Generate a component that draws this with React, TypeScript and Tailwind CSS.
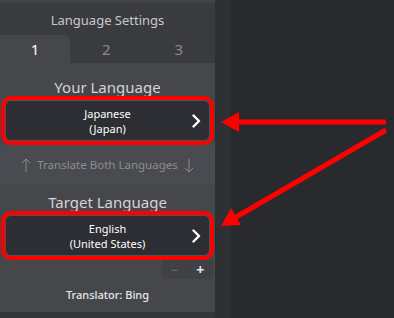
import React from "react";

function LangButton({ l1, l2 }: { l1: string; l2: string }) {
  return (
    <div className="mx-[1px] rounded-[10px] border-[4px] border-[#ff0000] p-0">
      <div className="relative flex h-[41px] flex-col items-center justify-center rounded-[6px] border border-[#505156] bg-[#2d2e33] text-[11px] leading-[15px] text-white">
        <span>{l1}</span>
        <span>{l2}</span>
        <svg className="absolute right-[8px] top-1/2 -translate-y-1/2" width="10" height="14" viewBox="0 0 10 14">
          <path d="M2.5 1.5 L8 7 L2.5 12.5" fill="none" stroke="#ffffff" strokeWidth="2.4" strokeLinecap="round" strokeLinejoin="round" />
        </svg>
      </div>
    </div>
  );
}

function Arrow({ down }: { down?: boolean }) {
  return (
    <svg width="10" height="15" viewBox="0 0 10 15" style={{ transform: down ? "rotate(180deg)" : undefined }}>
      <path d="M5 1 L5 14 M1 5 L5 1 L9 5" fill="none" stroke="#8c8d91" strokeWidth="1" />
    </svg>
  );
}

export default function App() {
  return (
    <div
      className="relative flex h-[318px] w-[394px] overflow-hidden bg-[#292a2e]"
      style={{ fontFamily: '"Noto Sans", "Open Sans", sans-serif' }}
    >
      <div className="flex w-[215px] flex-col bg-[#3a3b3f]">
        <div className="h-[3px] bg-[#424348]" />
        <div className="flex h-[32px] items-center justify-center pt-[3px] text-[13px] text-[#c9c9cc]">
          Language Settings
        </div>
        <div className="flex h-[28px] text-[15px]">
          <div className="flex w-[70px] items-center justify-center rounded-tr-[6px] bg-[#46474b] text-white">1</div>
          <div className="flex flex-1 items-center justify-center text-[#8a8b8f]">2</div>
          <div className="flex flex-1 items-center justify-center text-[#8a8b8f]">3</div>
        </div>
        <div className="flex flex-1 flex-col bg-[#46474b]">
          <div className="flex h-[33px] items-end justify-center text-[15px] leading-[18px] text-[#d4d4d6]">
            Your Language
          </div>
          <LangButton l1="Japanese" l2="(Japan)" />
          <div className="flex h-[40px] items-center justify-center gap-[6px] bg-[#4a4b50] text-[11.5px] text-[#8c8d91]">
            <Arrow />
            <span>Translate Both Languages</span>
            <Arrow down />
          </div>
          <div className="flex h-[26px] items-end justify-center text-[15px] leading-[18px] text-[#d4d4d6]">
            Target Language
          </div>
          <LangButton l1="English" l2="(United States)" />
          <div className="flex justify-end pr-[2px]">
            <div className="flex h-[19px] w-[51px] items-center justify-around rounded-b-[4px] bg-[#404145] text-[14px] leading-none">
              <span className="text-[#6c6d71]">−</span>
              <span className="font-bold text-[#e6e6e8]">+</span>
            </div>
          </div>
          <div className="flex flex-1 items-center justify-center text-[11px] font-medium text-[#e8e8ea]">
            Translator: Bing
          </div>
        </div>
        <div className="h-[6px] bg-[#343539]" />
      </div>
      <div className="w-[15px] bg-[#2f3034]" />
      <div className="flex-1 bg-[#292a2e]" />
      <svg className="pointer-events-none absolute left-0 top-0" width="394" height="318" viewBox="0 0 394 318">
        <line x1="386" y1="122" x2="236" y2="122" stroke="#ff0000" strokeWidth="5" />
        <polygon points="221,122 239,112 239,132" fill="#ff0000" />
        <line x1="386" y1="130" x2="236" y2="217" stroke="#ff0000" strokeWidth="5" />
        <polygon points="221,226 231,208 241,225" fill="#ff0000" />
      </svg>
    </div>
  );
}
